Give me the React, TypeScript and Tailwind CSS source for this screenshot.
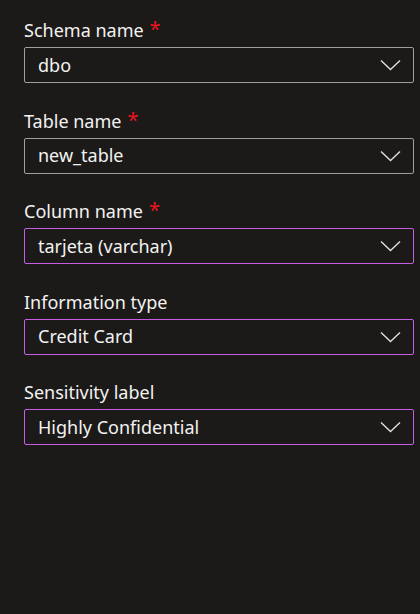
import React from "react";

const fields = [
  { label: "Schema name", value: "dbo", required: true, focus: false },
  { label: "Table name", value: "new_table", required: true, focus: false },
  { label: "Column name", value: "tarjeta (varchar)", required: true, focus: true },
  { label: "Information type", value: "Credit Card", required: false, focus: true },
  { label: "Sensitivity label", value: "Highly Confidential", required: false, focus: true },
];

function Chevron() {
  return (
    <svg width="21" height="12" viewBox="0 0 21 12" fill="none">
      <path d="M1 1.5 L10.5 10.5 L20 1.5" stroke="#e1dfdd" strokeWidth="1.4" />
    </svg>
  );
}

export default function App() {
  return (
    <div
      className="w-[420px] h-[614px] bg-[#1b1a19] text-[#f3f2f1] pt-[18px] pl-[24px] pr-[6px]"
      style={{ fontFamily: '"Noto Sans", "Open Sans", sans-serif' }}
    >
      {fields.map((f) => (
        <div key={f.label} className="mb-[25.5px]">
          <div className="h-[24px] leading-[24px] text-[18px] mb-[5px] flex items-center">
            <span>{f.label}</span>
            {f.required && <span className="text-[#f0141e] ml-[6px] text-[20px] self-start leading-[22px]">*</span>}
          </div>
          <div
            className={`h-[36px] w-[390px] rounded-[2px] border flex items-center justify-between pl-[13px] pr-[12px] ${
              f.focus ? "border-[#c65ee3]" : "border-[#a19f9d]"
            }`}
          >
            <span className="text-[18px]">{f.value}</span>
            <Chevron />
          </div>
        </div>
      ))}
    </div>
  );
}
